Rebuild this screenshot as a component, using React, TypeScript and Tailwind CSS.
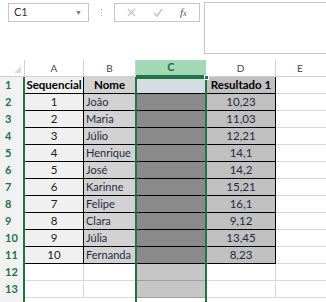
import { FC } from "react";

type Row = { n: number; a: string; b: string; d: string };

const rows: Row[] = [
  { n: 1, a: "Sequencial", b: "Nome", d: "Resultado 1" },
  { n: 2, a: "1", b: "João", d: "10,23" },
  { n: 3, a: "2", b: "Maria", d: "11,03" },
  { n: 4, a: "3", b: "Júlio", d: "12,21" },
  { n: 5, a: "4", b: "Henrique", d: "14,1" },
  { n: 6, a: "5", b: "José", d: "14,2" },
  { n: 7, a: "6", b: "Karinne", d: "15,21" },
  { n: 8, a: "7", b: "Felipe", d: "16,1" },
  { n: 9, a: "8", b: "Clara", d: "9,12" },
  { n: 10, a: "9", b: "Júlia", d: "13,45" },
  { n: 11, a: "10", b: "Fernanda", d: "8,23" },
];

const Toolbar: FC = () => (
  <div className="h-[60px] flex items-start pt-[3px] pl-[8px]">
    <div className="w-[81px] h-[19px] border border-[#c6c6c6] flex items-center justify-between pl-[5px] pr-[6px] text-[11px] text-[#333]">
      <span>C1</span>
      <span className="text-[7px] text-[#777]">▼</span>
    </div>
    <div className="w-[25px] h-[19px] flex flex-col items-center justify-center gap-[2px]">
      <span className="w-[1px] h-[1px] bg-[#aaa]" />
      <span className="w-[1px] h-[1px] bg-[#aaa]" />
      <span className="w-[1px] h-[1px] bg-[#aaa]" />
    </div>
    <div className="w-[86px] h-[19px] border border-[#c6c6c6] flex items-center justify-around px-[4px]">
      <svg width="9" height="9" viewBox="0 0 9 9">
        <path d="M1 1 L8 8 M8 1 L1 8" stroke="#c2c2c2" strokeWidth="1.2" />
      </svg>
      <svg width="10" height="9" viewBox="0 0 10 9">
        <path d="M1 5 L4 8 L9 1" stroke="#c2c2c2" strokeWidth="1.5" fill="none" />
      </svg>
      <span className="text-[11px] italic text-[#555] font-['Liberation_Serif',serif]">
        f<span className="text-[8px]">x</span>
      </span>
    </div>
    <div className="ml-[4px] -mt-[1px] flex-1 h-[52px] border border-r-0 border-[#c6c6c6]" />
  </div>
);

const HeaderRow: FC = () => (
  <div className="flex h-[17px] text-[10px] text-[#444]">
    <div className="w-[25px] border-r border-b border-[#d0d0d0] flex items-end justify-end pr-[3px] pb-[3px]">
      <svg width="7" height="7" viewBox="0 0 7 7">
        <path d="M7 0 L7 7 L0 7 Z" fill="#dcdcdc" />
      </svg>
    </div>
    <div className="w-[59px] border-r border-b border-[#d0d0d0] flex items-center justify-center">A</div>
    <div className="w-[52px] border-r border-b border-[#d0d0d0] flex items-center justify-center">B</div>
    <div className="w-[70px] bg-[#a3d8b9] border-b-2 border-[#217346] flex items-center justify-center font-bold text-[11px] text-[#1d6b40]">C</div>
    <div className="w-[70px] border-r border-b border-[#d0d0d0] flex items-center justify-center">D</div>
    <div className="flex-1 border-b border-[#d0d0d0] flex items-center justify-center pr-[2px]">E</div>
  </div>
);

const DataRow: FC<{ row: Row }> = ({ row }) => {
  const head = row.n === 1;
  return (
    <div className="flex h-[17px] text-[11px]">
      <div className="w-[25px] bg-[#f1f1f1] border-r-2 border-[#217346] flex items-center pl-[5px] font-bold text-[#217346]">
        {row.n}
      </div>
      <div
        className={`w-[59px] bg-[#f0f0f0] border-r border-b border-black flex items-center justify-center ${
          head ? "font-bold text-black text-[11.5px]" : "text-[#222] text-[11.5px]"
        }`}
      >
        {row.a}
      </div>
      <div
        className={`w-[52px] bg-[#d2d2d2] border-r border-b border-black flex items-center whitespace-nowrap overflow-hidden ${
          head ? "justify-center font-bold text-black text-[11.5px]" : "pl-[2px] text-[#1f2a44]"
        }`}
      >
        {row.b}
      </div>
      <div className={`w-[70px] border-b border-black ${head ? "bg-[#d6dce4]" : "bg-[#8a8a8a]"}`} />
      <div
        className={`w-[70px] bg-[#c0c0c0] border-x border-b border-black flex items-center justify-center text-[11.5px] ${
          head ? "font-bold text-black" : "text-[#1f2a44]"
        }`}
      >
        {row.d}
      </div>
      <div className="flex-1 border-b border-[#d8d8d8]" />
    </div>
  );
};

const EmptyRow: FC<{ n: number }> = ({ n }) => (
  <div className="flex h-[17px]">
    <div className="w-[25px] bg-[#f1f1f1] border-r-2 border-[#217346] flex items-center pl-[5px] text-[11px] font-bold text-[#217346]">
      {n}
    </div>
    <div className="w-[59px] border-r border-b border-[#d8d8d8]" />
    <div className="w-[52px] border-r border-b border-[#d8d8d8]" />
    <div className="w-[70px] bg-[#c6c6c6] border-b border-[#a0a0a0]" />
    <div className="w-[70px] border-r border-b border-[#d8d8d8]" />
    <div className="flex-1 border-b border-[#d8d8d8]" />
  </div>
);

export default function App() {
  return (
    <div className="w-[326px] h-[302px] overflow-hidden bg-white font-['Lato','Liberation_Sans',sans-serif]">
      <Toolbar />
      <HeaderRow />
      <div className="relative">
        {rows.map((r) => (
          <DataRow key={r.n} row={r} />
        ))}
        <EmptyRow n={12} />
        <EmptyRow n={13} />
        <div className="flex h-[17px]">
          <div className="w-[25px] bg-[#f1f1f1] border-r-2 border-[#217346]" />
        </div>
        <div className="absolute left-[135px] top-0 w-[72px] h-[300px] border-2 border-[#217346]" />
        <div className="absolute left-[204px] -top-[2px] w-[5px] h-[5px] bg-[#217346] border border-white" />
      </div>
    </div>
  );
}
